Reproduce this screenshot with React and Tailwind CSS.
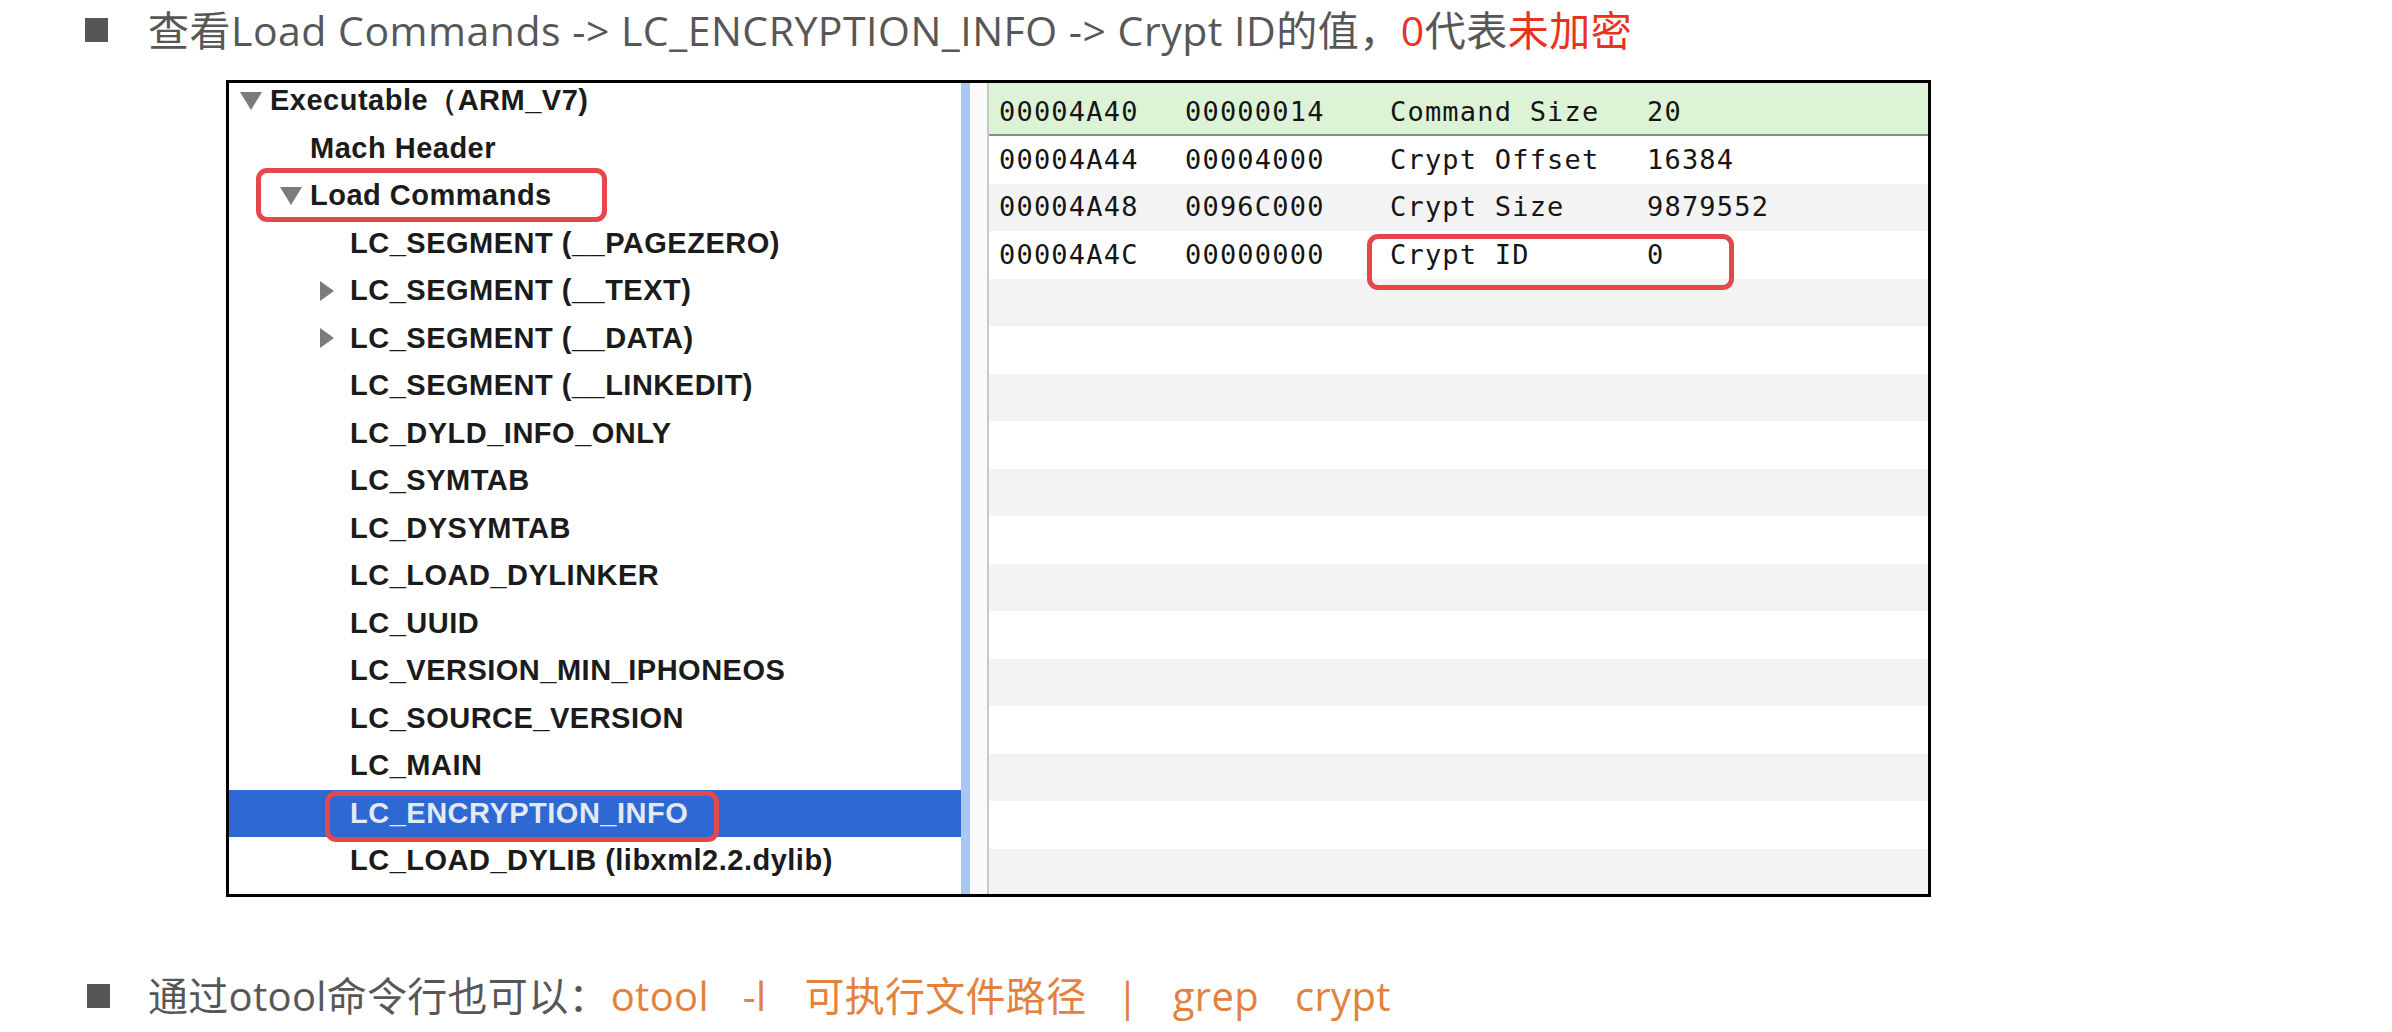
import React from 'react'

const tree = [
  { text: 'Executable（ARM_V7)', depth: 0, tri: 'down' },
  { text: 'Mach Header', depth: 1 },
  { text: 'Load Commands', depth: 1, tri: 'down', mark: true },
  { text: 'LC_SEGMENT (__PAGEZERO)', depth: 2 },
  { text: 'LC_SEGMENT (__TEXT)', depth: 2, tri: 'right' },
  { text: 'LC_SEGMENT (__DATA)', depth: 2, tri: 'right' },
  { text: 'LC_SEGMENT (__LINKEDIT)', depth: 2 },
  { text: 'LC_DYLD_INFO_ONLY', depth: 2 },
  { text: 'LC_SYMTAB', depth: 2 },
  { text: 'LC_DYSYMTAB', depth: 2 },
  { text: 'LC_LOAD_DYLINKER', depth: 2 },
  { text: 'LC_UUID', depth: 2 },
  { text: 'LC_VERSION_MIN_IPHONEOS', depth: 2 },
  { text: 'LC_SOURCE_VERSION', depth: 2 },
  { text: 'LC_MAIN', depth: 2 },
  { text: 'LC_ENCRYPTION_INFO', depth: 2, selected: true, mark: true },
  { text: 'LC_LOAD_DYLIB (libxml2.2.dylib)', depth: 2 },
]

const rows = [
  ['00004A44', '00004000', 'Crypt Offset', '16384'],
  ['00004A48', '0096C000', 'Crypt Size', '9879552'],
  ['00004A4C', '00000000', 'Crypt ID', '0', true],
]

const indent = ['pl-[11px]', 'pl-[51px]', 'pl-[91px]']

function Triangle({ dir }) {
  if (dir === 'down') {
    return (
      <svg width="22" height="18" viewBox="0 0 22 18">
        <path d="M0 0 H22 L11 18 Z" fill="#7b7b7b" />
      </svg>
    )
  }
  return (
    <svg width="14" height="20" viewBox="0 0 14 20">
      <path d="M0 0 L14 10 L0 20 Z" fill="#7b7b7b" />
    </svg>
  )
}

function TreeRow({ item }) {
  return (
    <div
      className={`relative flex items-center h-[47.5px] ${indent[item.depth]} ${
        item.selected ? 'bg-[#2d68d3] text-[#e4e9f6]' : 'text-[#1b1b1b]'
      }`}
    >
      <div className="w-[30px] flex items-center">
        {item.tri && <Triangle dir={item.tri} />}
      </div>
      <span className="text-[29px] font-bold tracking-[0.5px] whitespace-nowrap">{item.text}</span>
      {item.mark && item.depth === 1 && (
        <div className="absolute left-[27px] w-[351px] top-[-4px] bottom-[-2px] border-[5px] border-[#e5484c] rounded-[11px]" />
      )}
      {item.mark && item.selected && (
        <div className="absolute left-[96px] w-[394px] top-[1px] bottom-[-5px] border-[5px] border-[#e5484c] rounded-[11px]" />
      )}
    </div>
  )
}

function Bullet() {
  return <div className="w-[23px] h-[24px] bg-[#565656] shrink-0" />
}

export default function App() {
  const heading = { fontFamily: '"Open Sans", "Noto Sans CJK SC", sans-serif' }
  const mono = { fontFamily: '"DejaVu Sans Mono", monospace' }
  const blanks = Array.from({ length: 14 })

  return (
    <div className="w-[2392px] h-[1032px] bg-white overflow-hidden" style={{ fontFamily: '"Liberation Sans", sans-serif' }}>
      {/* heading line */}
      <div className="flex items-center h-[60px] pl-[85px]" style={heading}>
        <Bullet />
        <p className="ml-[40px] text-[41px] tracking-[0.5px] text-[#575757] whitespace-nowrap leading-none">
          查看Load Commands -&gt; LC_ENCRYPTION_INFO -&gt; Crypt ID的值，
          <span className="text-[#e8331f]">0</span>代表<span className="text-[#e8331f]">未加密</span>
        </p>
      </div>

      {/* MachOView window */}
      <div className="ml-[226px] mt-[20px] w-[1705px] h-[817px] border-[3px] border-black flex overflow-hidden">
        <div className="w-[732px] bg-white overflow-hidden">
          <div className="mt-[-6px]">
            {tree.map((item) => (
              <TreeRow key={item.text} item={item} />
            ))}
          </div>
        </div>
        <div className="w-[9px] bg-[#a8c8f1]" />
        <div className="w-[17px] bg-[#fafafa]" />
        <div className="w-[2px] bg-[#c8c8c8]" />
        <div className="flex-1 overflow-hidden text-[27px] tracking-[1.2px] text-[#151515]" style={mono}>
          <div className="flex items-center h-[53px] bg-[#ddf3d6] border-b-2 border-[#8a8a8a] pt-[8px]">
            <span className="w-[196px] pl-[10px]">00004A40</span>
            <span className="w-[205px]">00000014</span>
            <span className="w-[257px]">Command Size</span>
            <span>20</span>
          </div>
          {rows.map((r, i) => (
            <div
              key={r[0]}
              className={`relative flex items-center h-[47.5px] ${i % 2 === 1 ? 'bg-[#f3f3f3]' : 'bg-white'}`}
            >
              <span className="w-[196px] pl-[10px]">{r[0]}</span>
              <span className="w-[205px]">{r[1]}</span>
              <span className="w-[257px] whitespace-pre">{r[2]}</span>
              <span>{r[3]}</span>
              {r[4] && (
                <div className="absolute left-[378px] w-[367px] top-[3px] bottom-[-11px] border-[5px] border-[#e5484c] rounded-[11px]" />
              )}
            </div>
          ))}
          {blanks.map((_, i) => (
            <div key={i} className={`h-[47.5px] ${i % 2 === 0 ? 'bg-[#f3f3f3]' : 'bg-white'}`} />
          ))}
        </div>
      </div>

      {/* otool line */}
      <div className="flex items-center h-[60px] mt-[69px] pl-[87px]" style={heading}>
        <Bullet />
        <p className="ml-[38px] text-[40px] tracking-[0.3px] text-[#575757] whitespace-nowrap leading-none flex items-baseline">
          <span>通过otool命令行也可以：</span>
          <span className="text-[#e2823e] ml-[2px]">otool</span>
          <span className="text-[#e2823e] ml-[34px]">-l</span>
          <span className="text-[#e2823e] ml-[38px]">可执行文件路径</span>
          <span className="text-[#e2823e] ml-[30px]">|</span>
          <span className="text-[#e2823e] ml-[34px]">grep</span>
          <span className="text-[#e2823e] ml-[36px]">crypt</span>
        </p>
      </div>
    </div>
  )
}
